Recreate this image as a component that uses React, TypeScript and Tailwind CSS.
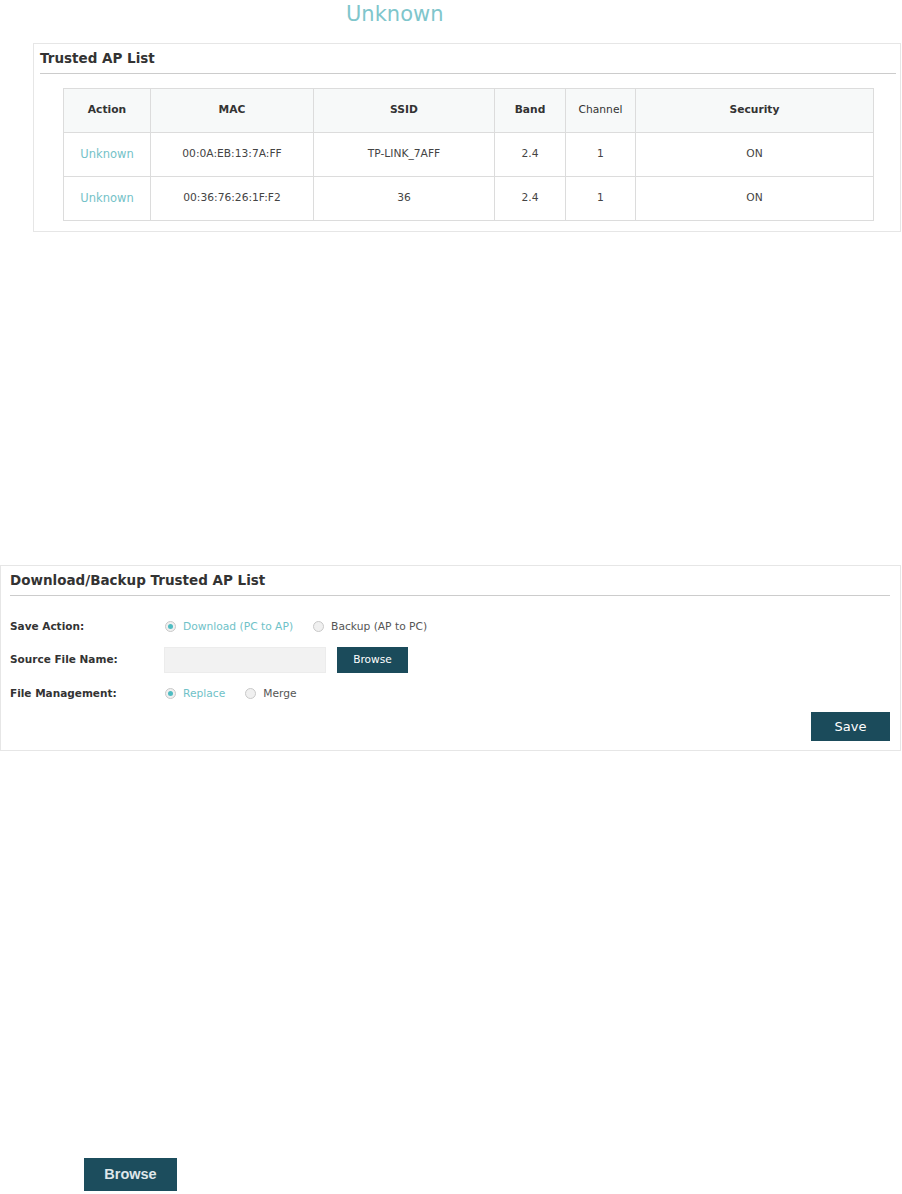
import React from 'react'

const font = { fontFamily: '"DejaVu Sans", Verdana, sans-serif' }

const rows = [
  { mac: '00:0A:EB:13:7A:FF', ssid: 'TP-LINK_7AFF', band: '2.4', channel: '1', security: 'ON' },
  { mac: '00:36:76:26:1F:F2', ssid: '36', band: '2.4', channel: '1', security: 'ON' },
]

function Radio({ checked, label }: { checked?: boolean; label: string }) {
  return (
    <label className="flex items-center">
      <span className="w-[11px] h-[11px] rounded-full border border-[#c9c9c9] bg-[#f0f0f0] flex items-center justify-center">
        {checked && <span className="w-[5px] h-[5px] rounded-full bg-[#4fbcc2]" />}
      </span>
      <span className={`ml-[7px] text-[10.7px] ${checked ? 'text-[#6fc2c8]' : 'text-[#555]'}`}>{label}</span>
    </label>
  )
}

export default function App() {
  return (
    <div className="bg-white w-[902px] h-[1194px] overflow-hidden" style={font}>
      {/* floating label at top */}
      <div className="h-[27px] pl-[346px] pt-[1px] flex items-center">
        <span className="text-[21px] leading-none text-[#7fc6cc]">Unknown</span>
      </div>

      {/* Trusted AP List */}
      <div className="mt-[16px] ml-[33px] w-[868px] border border-[#e6e6e6] pb-[10px]">
        <div className="ml-[6px] mr-[4px] h-[30px] flex items-center border-b border-[#cccccc]">
          <h2 className="text-[13.5px] font-bold text-[#333]">Trusted AP List</h2>
        </div>
        <table className="mt-[14px] ml-[29px] w-[810px] table-fixed border-collapse text-[10.7px] text-[#444]">
          <colgroup>
            <col className="w-[87px]" />
            <col className="w-[163px]" />
            <col className="w-[181px]" />
            <col className="w-[71px]" />
            <col className="w-[70px]" />
            <col className="w-[238px]" />
          </colgroup>
          <thead>
            <tr className="h-[44px] bg-[#f7f9f9] text-[#333]">
              <th className="border border-[#dcdcdc] font-bold">Action</th>
              <th className="border border-[#dcdcdc] font-bold">MAC</th>
              <th className="border border-[#dcdcdc] font-bold">SSID</th>
              <th className="border border-[#dcdcdc] font-bold">Band</th>
              <th className="border border-[#dcdcdc] font-normal">Channel</th>
              <th className="border border-[#dcdcdc] font-bold">Security</th>
            </tr>
          </thead>
          <tbody>
            {rows.map((r) => (
              <tr key={r.mac} className="h-[44px] text-center">
                <td className="border border-[#dcdcdc] text-[11.5px] text-[#74c2c8]">Unknown</td>
                <td className="border border-[#dcdcdc]">{r.mac}</td>
                <td className="border border-[#dcdcdc]">{r.ssid}</td>
                <td className="border border-[#dcdcdc]">{r.band}</td>
                <td className="border border-[#dcdcdc]">{r.channel}</td>
                <td className="border border-[#dcdcdc]">{r.security}</td>
              </tr>
            ))}
          </tbody>
        </table>
      </div>

      {/* Download/Backup Trusted AP List */}
      <div className="mt-[333px] w-[901px] border border-[#e6e6e6] pb-[9px]">
        <div className="ml-[9px] mr-[10px] h-[30px] flex items-center border-b border-[#cccccc]">
          <h2 className="text-[13.5px] font-bold text-[#333]">Download/Backup Trusted AP List</h2>
        </div>

        <div className="mt-[21px] h-[20px] pl-[9px] flex items-center">
          <span className="w-[154px] text-[10.5px] font-bold text-[#333]">Save Action:</span>
          <div className="pl-[1px] flex items-center gap-[20px]">
            <Radio checked label="Download (PC to AP)" />
            <Radio label="Backup (AP to PC)" />
          </div>
        </div>

        <div className="mt-[10px] h-[26px] pl-[9px] flex items-center">
          <span className="w-[154px] text-[10.5px] font-bold text-[#333]">Source File Name:</span>
          <input className="w-[162px] h-[26px] bg-[#f2f2f2] border border-[#ececec] outline-none" />
          <button className="ml-[11px] w-[71px] h-[26px] bg-[#1b4b5b] text-white text-[10.6px]">Browse</button>
        </div>

        <div className="mt-[11px] h-[20px] pl-[9px] flex items-center">
          <span className="w-[154px] text-[10.5px] font-bold text-[#333]">File Management:</span>
          <div className="pl-[1px] flex items-center gap-[20px]">
            <Radio checked label="Replace" />
            <Radio label="Merge" />
          </div>
        </div>

        <div className="mt-[8px] mr-[10px] flex justify-end">
          <button className="w-[79px] h-[29px] bg-[#1b4b5b] text-white text-[13px]">Save</button>
        </div>
      </div>

      {/* standalone Browse button */}
      <button
        className="block mt-[407px] ml-[84px] w-[93px] h-[33px] bg-[#1c4d5d] text-[#dfe7ea] text-[14.5px] font-bold"
        style={{ fontFamily: '"Liberation Sans", Arial, sans-serif' }}
      >
        Browse
      </button>
    </div>
  )
}
